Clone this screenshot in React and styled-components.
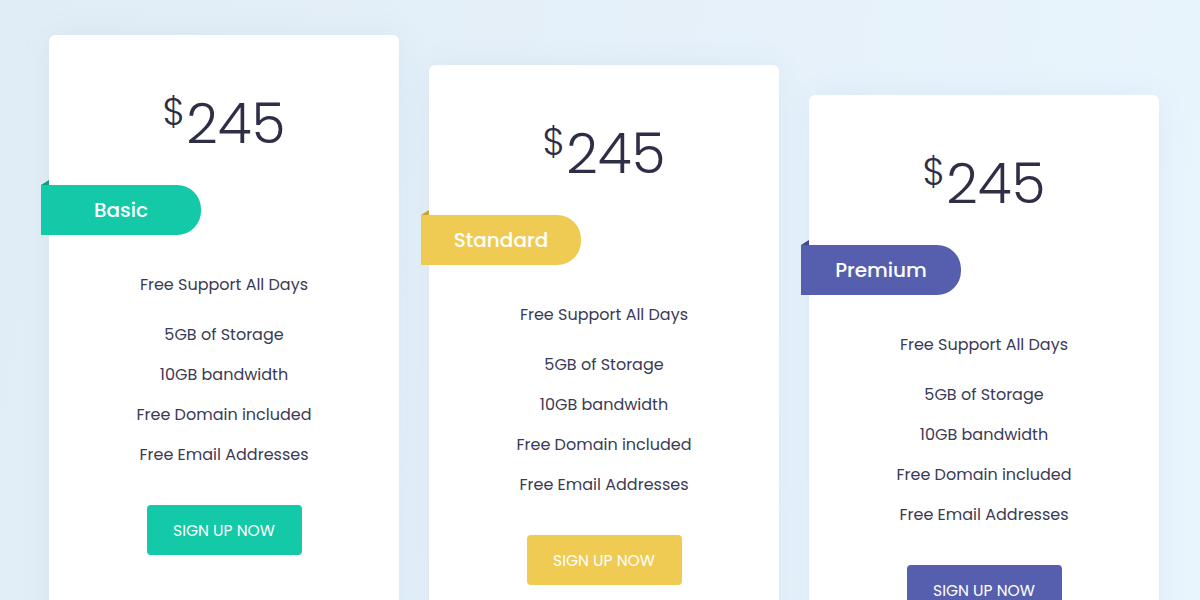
import React from 'react'
import styled, { createGlobalStyle } from 'styled-components'

const Global = createGlobalStyle`
  html, body {
    margin: 0;
    padding: 0;
  }
  body {
    font-family: Poppins, "Open Sans", "Liberation Sans", sans-serif;
    background: linear-gradient(100deg, #e1edf6 0%, #e6f1fa 60%, #e9f5fd 100%);
    height: 600px;
    overflow: hidden;
  }
`

const Section = styled.section`
  display: flex;
  align-items: flex-start;
  gap: 30px;
  padding: 35px 0 0 49px;
  height: 600px;
  box-sizing: border-box;
`

const Card = styled.div`
  width: 350px;
  height: 620px;
  margin-top: ${p => p.offset}px;
  background: #fff;
  border-radius: 6px;
  box-shadow: 0 0 30px rgba(80, 130, 180, 0.08);
  display: flex;
  flex-direction: column;
  align-items: center;
  flex-shrink: 0;
`

const Price = styled.div`
  margin-top: 58px;
  display: flex;
  align-items: flex-start;
  color: #2f2e47;
  font-weight: 300;
  font-size: 55px;
  line-height: 62px;
  height: 62px;
`

const Currency = styled.span`
  font-size: 38px;
  line-height: 38px;
  margin-right: 1px;
`

const Ribbon = styled.div`
  position: relative;
  align-self: flex-start;
  margin: 30px 0 0 -8px;
  width: 160px;
  height: 50px;
  border-radius: 0 24px 24px 0;
  background: ${p => p.color};
  color: #fff;
  font-size: 20px;
  font-weight: 500;
  display: flex;
  align-items: center;
  justify-content: center;

  &::before {
    content: '';
    position: absolute;
    top: -5px;
    left: 0;
    width: 0;
    height: 0;
    border-left: 8px solid transparent;
    border-bottom: 5px solid ${p => p.fold};
  }
`

const Features = styled.ul`
  list-style: none;
  margin: 30px 0 0;
  padding: 0;
  text-align: center;
`

const Feature = styled.li`
  font-size: 16px;
  line-height: 40px;
  color: #3b3a55;

  &:first-child {
    margin-bottom: 10px;
  }
`

const Button = styled.button`
  margin-top: 30px;
  width: 155px;
  height: 50px;
  border: none;
  border-radius: 4px;
  background: ${p => p.color};
  color: #fff;
  font-family: inherit;
  font-size: 15.5px;
  text-transform: uppercase;
  cursor: pointer;
`

const plans = [
  { name: 'Basic', color: '#13c9a7', fold: '#0e9e83', offset: 0 },
  { name: 'Standard', color: '#f0cb54', fold: '#c9a331', offset: 30 },
  { name: 'Premium', color: '#565fae', fold: '#3e4690', offset: 60 }
]

const features = [
  'Free Support All Days',
  '5GB of Storage',
  '10GB bandwidth',
  'Free Domain included',
  'Free Email Addresses'
]

const App = () => {
  return (
    <>
      <Global />
      <Section>
        {plans.map(plan => (
          <Card key={plan.name} offset={plan.offset}>
            <Price>
              <Currency>$</Currency>245
            </Price>
            <Ribbon color={plan.color} fold={plan.fold}>{plan.name}</Ribbon>
            <Features>
              {features.map(f => (
                <Feature key={f}>{f}</Feature>
              ))}
            </Features>
            <Button color={plan.color}>Sign up now</Button>
          </Card>
        ))}
      </Section>
    </>
  )
}

export default App
